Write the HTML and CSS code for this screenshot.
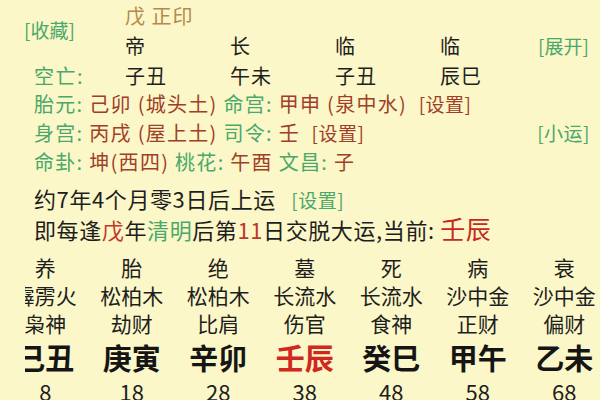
FILE: index.html
```html
<!DOCTYPE html>
<html lang="zh-CN">
<head>
<meta charset="utf-8">
<link rel="stylesheet" href="styles.css">
</head>
<body>
<div class="page">
  <div class="head">
    <div class="collect link-green">[收藏]</div>
    <div class="yin">戊 正印</div>
    <div class="cell r2 c2">帝</div>
    <div class="cell r2 c3">长</div>
    <div class="cell r2 c4">临</div>
    <div class="cell r2 c5">临</div>
    <div class="expand link-green">[展开]</div>
    <div class="label r3 c1">空亡:</div>
    <div class="cell r3 c2">子丑</div>
    <div class="cell r3 c3">午未</div>
    <div class="cell r3 c4">子丑</div>
    <div class="cell r3 c5">辰巳</div>
  </div>

  <div class="info">
    <div class="line"><span><span class="g">胎元: </span><span class="v">己卯 (城头土)</span> <span class="g">命宫: </span><span class="v">甲申 (泉中水)</span>  <span class="v br">[设置]</span></span></div>
    <div class="line"><span><span class="g">身宫: </span><span class="v">丙戌 (屋上土)</span> <span class="g">司令: </span><span class="v">壬</span>  <span class="v br">[设置]</span></span><span class="link-green small-run">[小运]</span></div>
    <div class="line"><span><span class="g">命卦: </span><span class="v">坤(西四)</span> <span class="g">桃花: </span><span class="v">午酉</span> <span class="g">文昌: </span><span class="v">子</span></span></div>
  </div>

  <div class="luck">
    <div class="lline first">约7年4个月零3日后上运 <span class="link-green set">[设置]</span></div>
    <div class="lline">即每逢<span class="red">戊</span>年<span class="green">清明</span>后第<span class="red">11</span>日交脱大运,当前: <span class="now">壬辰</span></div>
  </div>

  <div class="dayun">
    <div class="dgrid">
      <div class="d1">养</div><div class="d1">胎</div><div class="d1">绝</div><div class="d1">墓</div><div class="d1">死</div><div class="d1">病</div><div class="d1">衰</div>
      <div class="d2">霹雳火</div><div class="d2">松柏木</div><div class="d2">松柏木</div><div class="d2">长流水</div><div class="d2">长流水</div><div class="d2">沙中金</div><div class="d2">沙中金</div>
      <div class="d2">枭神</div><div class="d2">劫财</div><div class="d2">比肩</div><div class="d2">伤官</div><div class="d2">食神</div><div class="d2">正财</div><div class="d2">偏财</div>
      <div class="gz">己丑</div><div class="gz">庚寅</div><div class="gz">辛卯</div><div class="gz cur">壬辰</div><div class="gz">癸巳</div><div class="gz">甲午</div><div class="gz">乙未</div>
      <div class="age">8</div><div class="age">18</div><div class="age">28</div><div class="age">38</div><div class="age">48</div><div class="age">58</div><div class="age">68</div>
    </div>
  </div>
</div>
</body>
</html>
```

FILE: styles.css
```css
html, body {
  margin: 0;
  padding: 0;
}
body {
  background: #fbf7c8;
  font-family: "Noto Sans CJK SC", "Noto Sans", sans-serif;
  color: #1e1e1e;
  width: 600px;
  height: 400px;
  overflow: hidden;
}
.page {
  width: 600px;
}
.head {
  display: grid;
  grid-template-columns: 125px 105px 105px 105px 98px 1fr;
  grid-template-rows: 30px 31px 28px;
  align-items: center;
  font-size: 20px;
}
.link-green {
  color: #4aa86a;
  font-size: 19px;
}
.collect {
  grid-column: 1;
  grid-row: 1 / 3;
  padding-left: 24px;
  margin-top: -2px;
}
.yin {
  grid-column: 2 / 6;
  grid-row: 1;
  color: #b58a4a;
  letter-spacing: 1px;
}
.cell {
  letter-spacing: 1px;
  color: #1e1e1e;
}
.r2 { grid-row: 2; }
.r3 { grid-row: 3; }
.c1 { grid-column: 1; }
.c2 { grid-column: 2; }
.c3 { grid-column: 3; }
.c4 { grid-column: 4; }
.c5 { grid-column: 5; }
.expand {
  grid-column: 6;
  grid-row: 2;
}
.label {
  color: #4aa86a;
  padding-left: 34px;
  letter-spacing: 1.5px;
}
.info {
  padding-left: 34px;
  padding-right: 10px;
}
.line {
  height: 29px;
  line-height: 29px;
  font-size: 20px;
  letter-spacing: 1.3px;
  display: flex;
  justify-content: space-between;
  white-space: pre;
}
.g { color: #4aa86a; }
.v { color: #a13e28; }
.br { font-size: 19px; letter-spacing: 0.5px; }
.small-run {
  letter-spacing: 0.5px;
}
.luck {
  padding-left: 34px;
  margin-top: 7px;
}
.lline {
  height: 30px;
  line-height: 30px;
  font-size: 22px;
  letter-spacing: 0.6px;
  white-space: nowrap;
}
.lline .set {
  font-size: 19px;
  margin-left: 10px;
  letter-spacing: 0.5px;
}
.red { color: #c0392b; }
.green { color: #4aa86a; }
.now {
  color: #c8281e;
  font-size: 25px;
}
.dayun {
  margin-top: 10px;
  margin-left: 25px;
  overflow: hidden;
}
.dgrid {
  margin-left: -23px;
  display: grid;
  grid-template-columns: repeat(7, 86.5px);
  grid-template-rows: 28px 28px 28px 40px 30px;
  align-items: start;
  justify-items: center;
  white-space: nowrap;
}
.d1, .d2 {
  font-size: 21px;
  line-height: 28px;
  color: #1e1e1e;
}
.gz {
  font-size: 29px;
  font-weight: bold;
  line-height: 40px;
  color: #151515;
}
.gz.cur { color: #d0281e; }
.age {
  font-size: 22px;
  line-height: 28px;
  color: #1e1e1e;
}
```
